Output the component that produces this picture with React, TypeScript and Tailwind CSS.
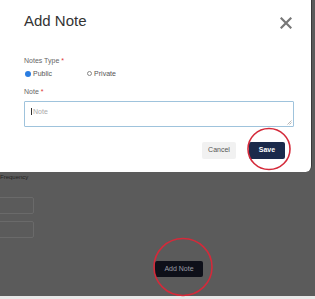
import React from 'react';

export default function App() {
  return (
    <div className="relative w-[315px] h-[299px] overflow-hidden bg-[#5b5b5b] font-['Liberation_Sans',Arial,sans-serif]">
      {/* Page behind overlay */}
      <div className="flex flex-col pt-[173px]">
        <div className="text-[6px] leading-[8px] text-[#222]">Frequency</div>
        <div className="mt-[16px] ml-[-6px] w-[40px] h-[17px] border border-[#6a6a6a] rounded-[2px]" />
        <div className="mt-[7px] ml-[-6px] w-[40px] h-[17px] border border-[#6a6a6a] rounded-[2px]" />
        <div className="mt-[23px] ml-[155px] w-[48px] h-[16px] bg-[#0e1019] rounded-[2px] flex items-center justify-center text-[7px] text-[#9a9ca6]">
          Add Note
        </div>
      </div>
      <div className="absolute left-0 right-0 bottom-0 h-[3px] bg-[#e8e8e8]" />

      {/* Modal */}
      <div className="absolute top-0 left-0 w-[312px] h-[172px] bg-white rounded-br-[6px] border-r border-[#3a3a3a] px-[24px]">
        <div className="flex items-center justify-between pt-[11px]">
          <h3 className="text-[15px] leading-[20px] text-[#333]">Add Note</h3>
          <svg width="12" height="12" viewBox="0 0 12 12" className="mr-[-5px] mt-[3px]">
            <path d="M1.5 1.5L10.5 10.5M10.5 1.5L1.5 10.5" stroke="#777" strokeWidth="2.2" strokeLinecap="square" />
          </svg>
        </div>

        <div className="mt-[25px] text-[7px] leading-[9px] text-[#666]">
          Notes Type <span className="text-[#d33]">*</span>
        </div>
        <div className="mt-[4px] flex items-center text-[7px] leading-[9px] text-[#555]">
          <span className="w-[6px] h-[6px] rounded-full bg-[#2a7de1] mr-[2px] ml-[1px]" />
          <span>Public</span>
          <span className="w-[5px] h-[5px] rounded-full border border-[#888] ml-[35px] mr-[2px]" />
          <span>Private</span>
        </div>

        <div className="mt-[9px] text-[7px] leading-[9px] text-[#666]">
          Note <span className="text-[#d33]">*</span>
        </div>
        <div className="relative mt-[5px] h-[26px] w-[270px] border border-[#9fc3dc] rounded-[1px] px-[6px] pt-[5px] text-[7px] leading-[9px] text-[#aaa]">
          <span className="border-l border-[#333] pl-[1px]">Note</span>
          <svg width="5" height="5" viewBox="0 0 5 5" className="absolute right-[1px] bottom-[1px]">
            <path d="M4.5 0.5L0.5 4.5M4.5 2.5L2.5 4.5" stroke="#999" strokeWidth="0.7" />
          </svg>
        </div>

        <div className="mt-[15px] flex justify-end items-center gap-[13px] pr-[2px]">
          <div className="w-[34px] h-[17px] bg-[#f1f1f1] rounded-[2px] flex items-center justify-center text-[7px] text-[#555]">
            Cancel
          </div>
          <div className="w-[36px] h-[17px] bg-[#1b2a4b] rounded-[2px] flex items-center justify-center text-[7px] font-bold text-white">
            Save
          </div>
        </div>
      </div>

      {/* Red annotation circles */}
      <svg className="absolute left-0 top-0 pointer-events-none" width="315" height="299">
        <ellipse cx="269" cy="149" rx="21" ry="20.5" fill="none" stroke="#d42a3a" strokeWidth="1.6" />
        <ellipse cx="183" cy="267" rx="29" ry="28.5" fill="none" stroke="#d42a3a" strokeWidth="1.6" />
      </svg>
    </div>
  );
}
